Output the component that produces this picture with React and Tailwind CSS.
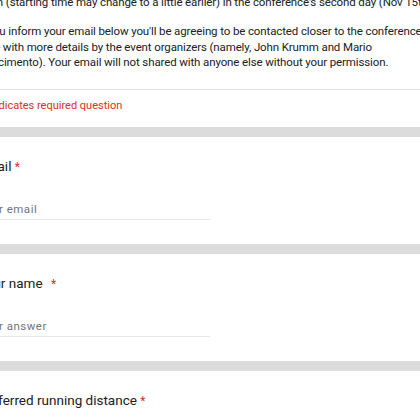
export default function App() {
  const questions = [
    { title: 'Email', wide: false, placeholder: 'Your email' },
    { title: 'Your name', wide: true, placeholder: 'Your answer' },
  ];

  return (
    <div className="w-[420px] h-[420px] overflow-hidden bg-[#dcdcdc] font-['Roboto',sans-serif]">
      <div className="ml-[-46px] w-[520px] flex flex-col gap-[10px]">
        {/* header card */}
        <div className="bg-white h-[135px] mt-[-8px] flex flex-col">
          <div className="pl-6 pt-[2px] text-[11.5px] leading-[16px] tracking-[-0.12px] text-[#202124] whitespace-nowrap">
            a run (starting time may change to a little earlier) in the conference's second day (Nov 15th)
          </div>
          <div className="pl-6 pt-[14px] text-[11.5px] leading-[15.5px] tracking-[-0.12px] text-[#202124] whitespace-nowrap">
            <div>If you inform your email below you'll be agreeing to be contacted closer to the conference</div>
            <div>date with more details by the event organizers (namely, John Krumm and Mario</div>
            <div>Nascimento). Your email will not shared with anyone else without your permission.</div>
          </div>
          <div className="mt-[18px] border-t border-[#e0e0e0]" />
          <div className="pl-[28px] pt-[8px] text-[11px] leading-[16px] text-[#d93025]">
            * Indicates required question
          </div>
        </div>

        {questions.map((q) => (
          <div key={q.title} className="bg-white h-[107px] pl-6 pt-[20px]">
            <div className="text-[13.5px] leading-[18px] text-[#202124]">
              {q.title}{' '}
              <span className={q.wide ? 'ml-[5px] text-[12px] text-[#d93025]' : 'text-[12px] text-[#d93025]'}>*</span>
            </div>
            <div className="mt-[26px] w-[232px] border-b border-[#e8e8e8] pb-[3px] text-[11.5px] leading-[14px] tracking-[0.5px] text-[#70757a]">
              {q.placeholder}
            </div>
          </div>
        ))}

        <div className="bg-white h-[60px] pl-6 pt-[20px]">
          <div className="text-[13.5px] leading-[18px] text-[#202124]">
            Preferred running distance <span className="text-[12px] text-[#d93025]">*</span>
          </div>
        </div>
      </div>
    </div>
  );
}
